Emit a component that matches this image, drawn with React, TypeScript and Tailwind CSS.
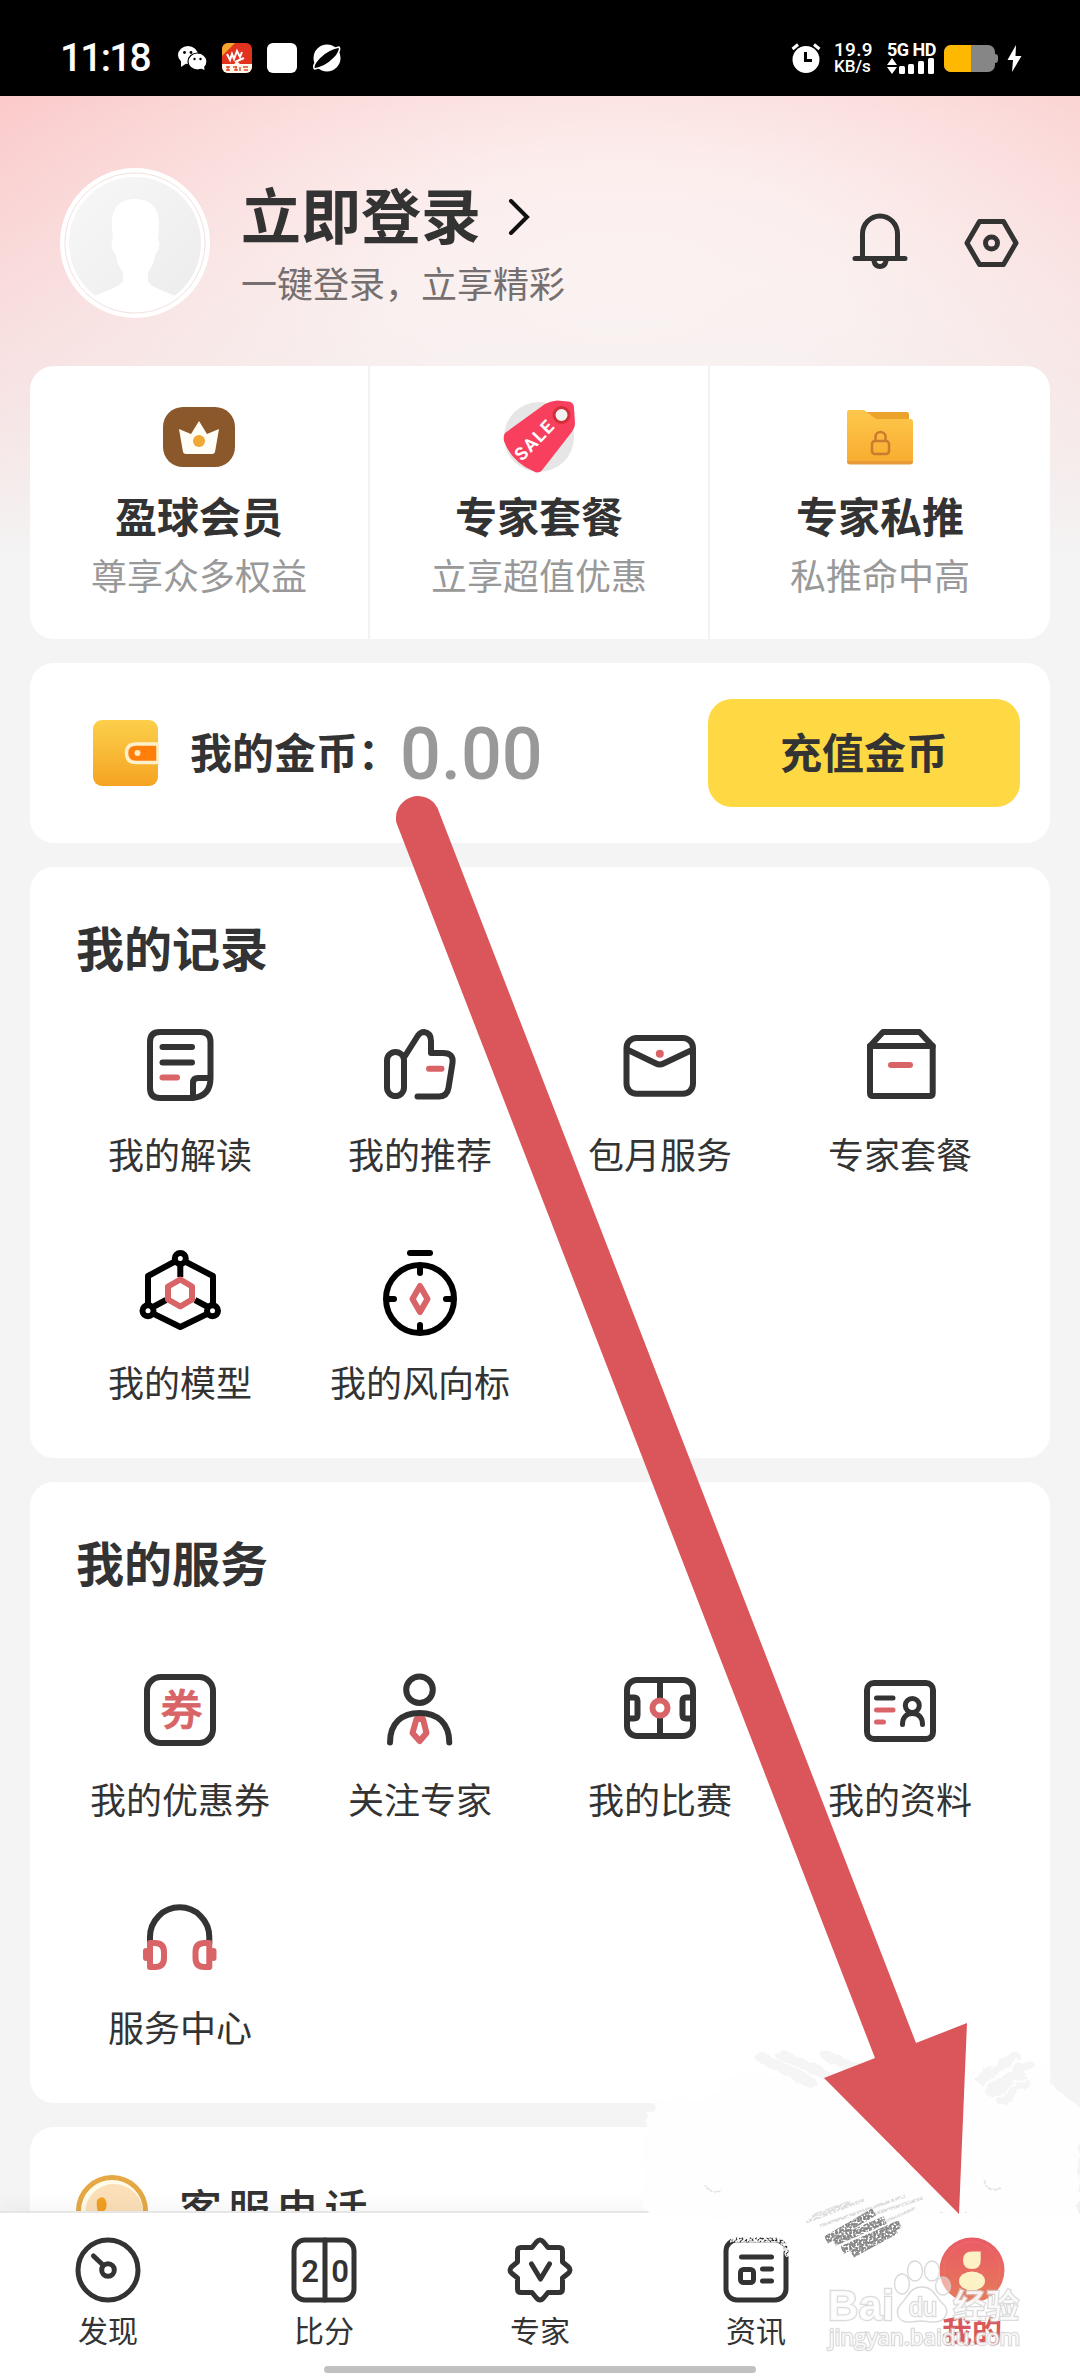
import type { ReactNode } from "react";

const DARK = "#333333";
const RED = "#d96467";

function Icon({ children, color = DARK }: { children: ReactNode; color?: string }) {
  return (
    <svg
      className="size-24"
      viewBox="0 0 96 96"
      fill="none"
      stroke={color}
      strokeWidth="6"
      strokeLinecap="round"
      strokeLinejoin="round"
    >
      {children}
    </svg>
  );
}

function NavIcon({ children }: { children: ReactNode }) {
  return (
    <svg
      className="size-[72px]"
      viewBox="0 0 72 72"
      fill="none"
      stroke={DARK}
      strokeWidth="5"
      strokeLinecap="round"
      strokeLinejoin="round"
    >
      {children}
    </svg>
  );
}

const records = [
  {
    label: "我的解读",
    icon: (
      <Icon>
        <path d="M61 81H28Q18 81 18 71V25Q18 15 28 15H68.500Q78.500 15 78.500 25V61Q78.500 79 61 81V66Q61 61 66 61H78.500" />
        <path d="M30.500 30H60M30.500 45.500H60" />
        <path d="M30.500 60.500H45" stroke={RED} />
      </Icon>
    ),
  },
  {
    label: "我的推荐",
    icon: (
      <Icon>
        <rect x="15" y="35" width="17" height="44" rx="8.500" />
        <path d="M33 39L46 18.500Q48.500 15 52 15Q59 16 59 24V36H71Q82 36 80.500 46L76.500 71Q75 79.500 67 79.500H45.500" />
        <path d="M57 51.700H69.500" stroke={RED} />
      </Icon>
    ),
  },
  {
    label: "包月服务",
    icon: (
      <Icon>
        <rect x="14.500" y="21" width="66.500" height="55.700" rx="10" />
        <path d="M16 33L44 46.500Q47.700 48.500 51.500 46.500L80 33" />
        <circle cx="47.800" cy="36.700" r="4" fill={RED} stroke="none" />
      </Icon>
    ),
  },
  {
    label: "专家套餐",
    icon: (
      <Icon>
        <path d="M18 29L31 15H67.500L80.700 29V76Q80.700 79 77.500 79H21Q18 79 18 76Z" />
        <path d="M18 29H80.700" />
        <path d="M39 48H58" stroke={RED} />
      </Icon>
    ),
  },
  {
    label: "我的模型",
    icon: (
      <Icon color="#000">
        <path d="M42 17L16 31V59M54 17L81 31V59M22 69L48.300 82L75 69M48.300 20V32M21 62L34 55M76 62L63 55" strokeLinecap="butt" />
        <circle cx="48.300" cy="13.500" r="5.500" strokeWidth="6" />
        <circle cx="16" cy="65.700" r="5.500" strokeWidth="6" />
        <circle cx="80.500" cy="65.700" r="5.500" strokeWidth="6" />
        <path d="M48.300 34.500L60 41.500V54.500L48.300 61.500L36 54.500V41.500Z" stroke={RED} fill="#fff" />
      </Icon>
    ),
  },
  {
    label: "我的风向标",
    icon: (
      <Icon color="#000">
        <path d="M38 8H58" />
        <circle cx="48" cy="54" r="34" />
        <path d="M48 22V28M48 80V86M16 54H22M74 54H80" />
        <path d="M48 41L55.500 54L48 67L40.500 54Z" stroke={RED} />
      </Icon>
    ),
  },
];

const services = [
  {
    label: "我的优惠券",
    icon: (
      <Icon>
        <rect x="15" y="15" width="66" height="66" rx="14" />
        <text
          x="49.500"
          y="63"
          fontSize="42"
          fontWeight="500"
          textAnchor="middle"
          fill={RED}
          stroke={RED}
          strokeWidth="0.800"
          fontFamily="'Noto Sans CJK SC', sans-serif"
        >
          券
        </text>
      </Icon>
    ),
  },
  {
    label: "关注专家",
    icon: (
      <Icon>
        <circle cx="47.500" cy="27.800" r="13.300" />
        <path d="M44.500 57H51L54.500 71L47.700 79L40.500 71Z" stroke={RED} strokeWidth="6" />
        <path d="M18 80.500C18 61 30 51 47.700 51C65 51 77.300 61 77.300 80.500" />
      </Icon>
    ),
  },
  {
    label: "我的比赛",
    icon: (
      <Icon>
        <rect x="15" y="18" width="66" height="56" rx="10" />
        <path d="M48 18V74M15 35.500H22Q25.500 35.500 25.500 39V53Q25.500 56.500 22 56.500H15M81 35.500H74Q70.500 35.500 70.500 39V53Q70.500 56.500 74 56.500H81" />
        <circle cx="48" cy="46" r="7.500" stroke={RED} fill="#fff" />
      </Icon>
    ),
  },
  {
    label: "我的资料",
    icon: (
      <Icon>
        <rect x="15" y="21" width="66" height="56" rx="7" />
        <g strokeWidth="5">
          <path d="M24.500 36H41" />
          <path d="M24.500 48H41M24.500 60H31.500" stroke={RED} />
          <circle cx="60.300" cy="43.500" r="7" />
          <path d="M50.500 62.500C50.500 54.500 55 51.500 60.300 51.500C66 51.500 70.500 54.500 70.500 62.500" />
        </g>
      </Icon>
    ),
  },
  {
    label: "服务中心",
    icon: (
      <Icon>
        <path d="M18 53V47A29.500 29.500 0 0 1 77.300 47V53" />
        <g stroke={RED}>
          <path d="M18 53H23Q32 53 32 62V68Q32 77 23 77H18ZM77.300 53H72.500Q63.500 53 63.500 62V68Q63.500 77 72.500 77H77.300Z" />
          <path d="M14 61V68M81.500 61V68" />
        </g>
      </Icon>
    ),
  },
];

const tabs = [
  {
    label: "发现",
    icon: (
      <NavIcon>
        <circle cx="36" cy="36" r="30" />
        <circle cx="36" cy="36" r="6.300" />
        <path d="M31 31L21.500 22" />
      </NavIcon>
    ),
  },
  {
    label: "比分",
    icon: (
      <NavIcon>
        <rect x="6" y="6" width="60" height="60" rx="11" />
        <path d="M37 6V66" />
        <g fill={DARK} stroke="none" fontFamily="Roboto, sans-serif" fontWeight="600" fontSize="31" textAnchor="middle">
          <text x="22" y="48">2</text>
          <text x="52" y="48">0</text>
        </g>
      </NavIcon>
    ),
  },
  {
    label: "专家",
    icon: (
      <NavIcon>
        <path d="M32.500 8Q36 4 39.500 8L44 13.500H55Q58.500 13.500 58.500 17V28L64 32.500Q68 36 64 39.500L58.500 44V55Q58.500 58.500 55 58.500H44L39.500 64Q36 68 32.500 64L28 58.500H17Q13.500 58.500 13.500 55V44L8 39.500Q4 36 8 32.500L13.500 28V17Q13.500 13.500 17 13.500H28Z" />
        <path d="M27.500 30L36.500 45L45.500 30" />
      </NavIcon>
    ),
  },
  {
    label: "资讯",
    icon: (
      <NavIcon>
        <rect x="6" y="6" width="60" height="60" rx="11" />
        <path d="M21.500 23H51.500M42.500 35H51.500M42.500 47H51.500" />
        <rect x="20.500" y="35.500" width="13" height="13" rx="3" />
      </NavIcon>
    ),
  },
  {
    label: "我的",
    active: true,
    icon: (
      <svg className="size-[72px]" viewBox="0 0 72 72">
        <defs>
          <linearGradient id="mine" x1="0" y1="0" x2="0" y2="1">
            <stop offset="0" stopColor="#e95b66" />
            <stop offset="1" stopColor="#e67a58" />
          </linearGradient>
        </defs>
        <circle cx="36" cy="36" r="32.500" fill="url(#mine)" />
        <circle cx="36" cy="36" r="28" fill="none" stroke="#f07a70" strokeOpacity="0.5" />
        <path d="M27 26Q27 17.500 36 17.500H44.700V26Q44.700 35 36 35Q27 35 27 26Z" fill="#fdf1c6" />
        <ellipse cx="36" cy="47" rx="13" ry="9.500" fill="#fdf1c6" />
      </svg>
    ),
  },
];

function StatusBar() {
  return (
    <div className="flex h-24 shrink-0 justify-between bg-black pt-[38px] pr-[58px] pl-[60px] text-white">
      <div className="flex h-10 items-center">
        <span className="w-[116px] font-[Roboto,sans-serif] text-[39px] leading-10 font-medium tracking-[-1.800px]">
          11:18
        </span>
        <svg className="mr-[15px] ml-[2px] h-6 w-[29px]" viewBox="0 0 29 24">
          <ellipse cx="10" cy="9" rx="10" ry="9" fill="#fff" />
          <path d="M3 15L3 21L9 17Z" fill="#fff" />
          <ellipse cx="19.500" cy="15.500" rx="9.500" ry="8.500" fill="#fff" stroke="#000" strokeWidth="1.200" />
          <path d="M22 22L26.500 24L26 19Z" fill="#fff" />
          <g fill="#000">
            <circle cx="6.500" cy="6.500" r="1.400" />
            <circle cx="13" cy="6.500" r="1.400" />
            <circle cx="16.500" cy="13" r="1.200" />
            <circle cx="22.500" cy="13" r="1.200" />
          </g>
        </svg>
        <svg className="mr-[15px] size-[30px]" viewBox="0 0 30 30">
          <defs>
            <clipPath id="appclip">
              <rect width="30" height="30" rx="6" />
            </clipPath>
          </defs>
          <g clipPath="url(#appclip)">
            <rect width="30" height="30" fill="#e2331f" />
            <path d="M0 0H13L0 13Z" fill="#f3a62c" />
            <path d="M5 11L8 17L10 11L12 16L15 8L18 14L20 9M13 19L22 15" stroke="#fff" strokeWidth="2" fill="none" />
            <path d="M0 21H12L15 18.500L18 21H30V30H0Z" fill="#fff6ec" />
            <path d="M4 24H8M4 27H8M6 23V28M11 24H15M12 27H16M14 23V28M18 24V28M21 24H26M22 27H26" stroke="#e2502c" strokeWidth="1.400" />
          </g>
        </svg>
        <div className="mr-[14px] size-[30px] rounded-md bg-white" />
        <svg className="h-[30px] w-8" viewBox="0 0 32 30">
          <circle cx="16" cy="15" r="13.500" fill="#fff" />
          <path d="M3.500 26C0 22 12 7 28 4C31 8 20 23 3.500 26Z" fill="#000" stroke="#fff" strokeWidth="1.500" />
        </svg>
      </div>
      <div className="flex h-10 items-center">
        <svg className="mr-[13px] h-[30px] w-[30px]" viewBox="0 0 30 30">
          <circle cx="15" cy="16.500" r="13.500" fill="#fff" />
          <path d="M1.500 6L7 1.500M28.500 6L23 1.500" stroke="#fff" strokeWidth="3" />
          <path d="M14.500 9V17.500H21" stroke="#000" strokeWidth="3" fill="none" />
        </svg>
        <div className="flex w-[53px] flex-col font-[Roboto,sans-serif] font-medium">
          <span className="text-[19px] leading-[17px] tracking-[0.300px]">19.9</span>
          <span className="text-[17px] leading-[17px]">KB/s</span>
        </div>
        <div className="mr-[9px] flex w-[48px] flex-col font-[Roboto,sans-serif] font-bold">
          <span className="text-[18px] leading-[17px] tracking-[-0.500px] whitespace-nowrap">5G HD</span>
          <svg className="h-[17px] w-[48px]" viewBox="0 0 48 17" fill="#fff">
            <path d="M5 0L10 7H0ZM5 16L0 9H10Z" />
            <rect x="12" y="8" width="6" height="8" rx="1.500" />
            <rect x="21" y="6" width="6" height="10" rx="1.500" />
            <rect x="31" y="3" width="6" height="13" rx="1.500" />
            <rect x="41" y="0" width="6" height="16" rx="1.500" />
          </svg>
        </div>
        <div className="flex h-[27px] w-[51px] overflow-hidden rounded-[7px] bg-[#868686]">
          <div className="w-[27px] bg-[#ffb800]" />
        </div>
        <div className="mr-[9px] h-[9px] w-[3px] rounded-r-sm bg-[#868686]" />
        <svg className="h-[27px] w-[15px]" viewBox="0 0 15 27">
          <path d="M9 0L0.500 15H6L5 27L14.500 11H8.500Z" fill="#fff" />
        </svg>
      </div>
    </div>
  );
}

function Header() {
  return (
    <div className="flex h-[270px] shrink-0 pt-[72px] pl-[60px]">
      <svg className="size-[150px] shrink-0" viewBox="0 0 150 150">
        <defs>
          <linearGradient id="avatar" x1="0" y1="0" x2="1" y2="1">
            <stop offset="0" stopColor="#f7f7f7" />
            <stop offset="1" stopColor="#ececec" />
          </linearGradient>
          <clipPath id="face">
            <circle cx="75" cy="75" r="67" />
          </clipPath>
        </defs>
        <circle cx="75" cy="75" r="75" fill="#fff" />
        <circle cx="75" cy="75" r="70" fill="#fff" stroke="#f3e0de" />
        <circle cx="75" cy="75" r="66" fill="url(#avatar)" />
        <g clipPath="url(#face)">
          <path
            d="M75 31C58 31 51 42 52 58L53 72C50 74 52 84 56 87C57 96 60 100 63 104V113C60 120 40 124 25 133V150H125V133C110 124 90 120 88 113V104C91 100 94 96 95 87C99 84 101 74 98 72L99 58C100 42 92 31 75 31Z"
            fill="#fff"
          />
        </g>
      </svg>
      <div className="ml-[31px] grow">
        <div className="mt-[7px] flex h-[76px] items-center">
          <h1 className="text-[60px] leading-[76px] font-bold text-[#333]">立即登录</h1>
          <svg className="mt-[7px] ml-[26px] h-9 w-[26px]" viewBox="0 0 26 36" fill="none" stroke="#111" strokeWidth="4">
            <path d="M4 2L20 18L4 34" strokeLinecap="round" />
          </svg>
        </div>
        <p className="mt-[5px] text-[36px] leading-[52px] text-[#766f6f]">一键登录，立享精彩</p>
      </div>
      <div className="mt-[39px] mr-[53px] flex gap-[39px]">
        <svg className="size-[72px]" viewBox="0 0 72 72" fill="none" stroke={DARK} strokeWidth="5" strokeLinecap="round">
          <path d="M18.500 51V27A17.500 18 0 0 1 53.500 27V51M11 51.500H61" />
          <path d="M30 54Q31 59.500 36 59.500Q41 59.500 42 54" />
        </svg>
        <svg className="size-[72px]" viewBox="0 0 72 72" fill="none" stroke={DARK} strokeWidth="5" strokeLinejoin="round">
          <path d="M12 36L24.500 14.500H48.500L61 36L48.500 57.500H24.500Z" />
          <circle cx="36.500" cy="36" r="6" />
        </svg>
      </div>
    </div>
  );
}

const perks = [
  {
    title: "盈球会员",
    desc: "尊享众多权益",
    icon: (
      <svg className="size-[84px]" viewBox="0 0 84 84">
        <rect x="6" y="12" width="72" height="60" rx="20" fill="#8a582b" />
        <path d="M22 34L34 39L42 26L50 39L62 34L58 57Q57.500 59 55 59H29Q26.500 59 26 57Z" fill="#fffdf6" />
        <circle cx="42" cy="46" r="6" fill="#f0a733" />
      </svg>
    ),
  },
  {
    title: "专家套餐",
    desc: "立享超值优惠",
    icon: (
      <svg className="size-[84px]" viewBox="0 0 84 84">
        <circle cx="42" cy="42" r="35" fill="#e6e6e6" />
        <path d="M8 38L48 9Q53 6 60 5.500L71 6.500Q77 7 77 13L78 28Q78 33 74 38L46 74Q42 80 36 76Q14 66 7 46Q6 41 8 38Z" fill="#f8405e" />
        <circle cx="64.500" cy="20" r="7.500" fill="#f2f2f2" stroke="#cf3038" strokeWidth="3" />
        <text
          x="0"
          y="0"
          transform="translate(25 67) rotate(-46)"
          fill="#fff"
          fontFamily="Roboto, sans-serif"
          fontWeight="700"
          fontSize="18"
          letterSpacing="1.500"
        >
          SALE
        </text>
      </svg>
    ),
  },
  {
    title: "专家私推",
    desc: "私推命中高",
    icon: (
      <svg className="size-[84px]" viewBox="0 0 84 84">
        <defs>
          <linearGradient id="folder" x1="0" y1="0" x2="0" y2="1">
            <stop offset="0" stopColor="#fdc84c" />
            <stop offset="1" stopColor="#f9ab2e" />
          </linearGradient>
        </defs>
        <path d="M20 17H69Q71 17 71 20V32H20Z" fill="#eca32c" />
        <path d="M9 17Q9 15 11 15H26L38 24H72Q75 24 75 27V66Q75 69 72 69H12Q9 69 9 66Z" fill="url(#folder)" />
        <path d="M9 66Q9 69.500 12 69.500H72Q75 69.500 75 66Z" fill="#e89a38" />
        <g fill="none" stroke="#cb7b30" strokeWidth="2.500">
          <rect x="34" y="46" width="17" height="13" rx="3" />
          <path d="M37.500 46V42A5 5 0 0 1 47.500 42V46" />
        </g>
      </svg>
    ),
  },
];

function Perks() {
  return (
    <div className="grid h-[273px] shrink-0 grid-cols-3 rounded-3xl bg-white">
      {perks.map((perk, i) => (
        <div
          key={perk.title}
          className={`flex flex-col items-center pt-[29px] ${i < 2 ? "border-r-2 border-[#f2f2f2]" : ""}`}
        >
          {perk.icon}
          <h2 className="mt-[9px] text-[42px] leading-[54px] font-bold text-[#333]">{perk.title}</h2>
          <p className="mt-[6px] text-[36px] leading-[52px] text-[#999]">{perk.desc}</p>
        </div>
      ))}
    </div>
  );
}

function Coins() {
  return (
    <div className="flex h-[180px] shrink-0 items-center rounded-3xl bg-white pr-[30px] pl-[63px]">
      <svg className="size-[66px]" viewBox="0 0 66 66">
        <defs>
          <linearGradient id="wallet" x1="0" y1="0" x2="0" y2="1">
            <stop offset="0" stopColor="#fccf4a" />
            <stop offset="1" stopColor="#f5a422" />
          </linearGradient>
        </defs>
        <rect width="65" height="66" rx="9" fill="url(#wallet)" />
        <path d="M65 24H43Q33.500 24 33.500 33Q33.500 42.500 43 42.500H65Z" fill="#ff7f0a" stroke="#fff0cc" strokeWidth="3.500" />
        <circle cx="44.500" cy="33" r="3" fill="#ffe9c0" />
      </svg>
      <span className="mb-1 ml-[31px] w-[210px] text-[42px] leading-[60px] font-bold whitespace-nowrap text-[#333]">
        我的金币：
      </span>
      <span className="mt-[3px] font-[Roboto,sans-serif] text-[72px] leading-[84px] font-medium text-[#999]">
        0.00
      </span>
      <button className="ml-auto h-[108px] w-[312px] rounded-3xl bg-[#fed944] pb-1 text-[42px] leading-[60px] font-bold text-[#333]">
        充值金币
      </button>
    </div>
  );
}

function Section({
  title,
  items,
  className,
  gridClassName,
}: {
  title: string;
  items: { label: string; icon: ReactNode }[];
  className: string;
  gridClassName: string;
}) {
  return (
    <div className={`shrink-0 rounded-3xl bg-white px-[30px] ${className}`}>
      <h2 className="ml-4 pt-[47px] text-[48px] leading-[64px] font-bold text-[#333]">{title}</h2>
      <div className={`grid grid-cols-4 ${gridClassName}`}>
        {items.map((item) => (
          <div key={item.label} className="flex h-[228px] flex-col items-center">
            {item.icon}
            <span className="mt-[13px] text-[36px] leading-[54px] whitespace-nowrap text-[#333]">{item.label}</span>
          </div>
        ))}
      </div>
    </div>
  );
}

function Hotline() {
  return (
    <div className="flex h-[144px] shrink-0 items-center rounded-t-3xl bg-white pl-[45px]">
      <svg className="mt-[24px] size-[74px]" viewBox="0 0 74 74">
        <circle cx="37" cy="37" r="33.500" fill="#fffbe9" stroke="#e5a845" strokeWidth="5" />
        <circle cx="39" cy="39" r="29" fill="#fbdfb8" />
        <path d="M22 26Q28 20 31 27Q33 34 29 37Q32 45 41 50L46 47Q54 50 49 56Q42 60 32 51Q20 40 22 26Z" fill="#f0a021" />
      </svg>
      <span className="mt-[16px] ml-[30px] text-[43px] leading-[60px] font-medium tracking-[5.500px] text-[#333]">
        客服电话
      </span>
    </div>
  );
}

function TabBar() {
  return (
    <nav className="relative grid h-[165px] shrink-0 grid-cols-5 border-t-2 border-[#e6e6e6] bg-white pt-[21px] shadow-[0_-6px_18px_rgba(0,0,0,0.04)]">
      {tabs.map((tab) => (
        <div key={tab.label} className="flex flex-col items-center">
          {tab.icon}
          <span
            className={`mt-[3px] text-[30px] leading-[40px] ${tab.active ? "font-bold text-[#d9585d]" : "text-[#333]"}`}
          >
            {tab.label}
          </span>
        </div>
      ))}
      <div className="absolute bottom-[3px] left-[324px] h-[7px] w-[432px] rounded-full bg-[#c1c1c1]" />
    </nav>
  );
}

// Brush patch, pointer arrow and watermark, laid over the whole screen
function Overlay() {
  return (
    <svg className="pointer-events-none absolute inset-0 h-[2376px] w-[1080px]" viewBox="0 0 1080 2376">
      <defs>
        <filter id="rough" x="-10%" y="-30%" width="120%" height="160%">
          <feTurbulence type="fractalNoise" baseFrequency="0.08" numOctaves="3" seed="4" result="n" />
          <feDisplacementMap in="SourceGraphic" in2="n" scale="14" />
        </filter>
        <filter id="grain" x="-10%" y="-30%" width="120%" height="160%">
          <feTurbulence type="fractalNoise" baseFrequency="0.5" numOctaves="2" seed="9" result="n" />
          <feColorMatrix in="n" type="matrix" values="0 0 0 0 0  0 0 0 0 0  0 0 0 0 0  5 0 0 0 -1.7" result="m" />
          <feComposite in="SourceGraphic" in2="m" operator="in" />
        </filter>
      </defs>

      <path
        d="M655 2100L642 2130V2208L655 2216H1080V2108L1052 2086L1046 2060L990 2068L830 2086L740 2070L700 2100Z"
        fill="#fefefe"
        filter="url(#rough)"
      />
      <g stroke="#f5f5f5" strokeWidth="11" strokeLinecap="round" filter="url(#rough)">
        <path d="M762 2058L812 2083M780 2054L832 2078M828 2056L860 2070M980 2078L1014 2056M990 2090L1030 2066M1002 2100L1026 2084" />
      </g>
      <g stroke="#777" strokeWidth="4" filter="url(#grain)">
        <path d="M806 2222L864 2200M812 2216L850 2202M820 2226L905 2196M874 2214L923 2198M880 2224L915 2208" strokeWidth="3" opacity="0.25" />
        <path d="M826 2240L874 2212M834 2242L885 2220M842 2250L900 2224M852 2254L896 2230" strokeWidth="8" opacity="0.9" />
        <path d="M984 2180Q988 2194 1001 2188M705 2185Q712 2196 722 2190" strokeWidth="2" fill="none" opacity="0.2" />
      </g>
      <path d="M730 2239H782L789 2256" stroke="#fff" strokeWidth="7" fill="none" filter="url(#grain)" />

      <path
        d="M396.500 823A22 22 0 0 1 437.500 808L916 2043L967 2023L959 2214L824 2078L875 2058Z"
        fill="#db565b"
      />

      <g fill="#fff" fillOpacity="0.45" stroke="#cfcfcf" strokeWidth="1.400" strokeOpacity="0.8">
        <ellipse cx="902" cy="2284" rx="7.500" ry="10" />
        <ellipse cx="915" cy="2271" rx="7.500" ry="10" />
        <ellipse cx="932" cy="2271" rx="7.500" ry="10" />
        <ellipse cx="943" cy="2286" rx="7.500" ry="9" />
        <path d="M922 2287C934 2287 936 2298 943 2304C951 2311 945 2322 935 2322C928 2322 926 2321 921 2321C916 2321 914 2322 908 2322C898 2322 894 2311 901 2304C908 2297 910 2287 922 2287Z" />
        <g paintOrder="stroke" strokeWidth="2.500" fillOpacity="0.85" strokeOpacity="0.75">
          <text x="828" y="2320" fontFamily="'Liberation Sans', sans-serif" fontWeight="700" fontSize="42" textLength="66">
            Bai
          </text>
          <text x="909" y="2316" fontFamily="'Liberation Sans', sans-serif" fontWeight="400" fontSize="25">
            du
          </text>
          <text x="953" y="2318" fontFamily="'Noto Sans CJK SC', sans-serif" fontWeight="500" fontSize="33">
            经验
          </text>
          <text x="829" y="2345" fontFamily="'Open Sans', sans-serif" fontSize="22" textLength="191">
            jingyan.baidu.com
          </text>
        </g>
      </g>
    </svg>
  );
}

export default function App() {
  return (
    <div className="relative flex h-[2376px] w-[1080px] flex-col overflow-hidden bg-[#f4f4f4] font-['Noto_Sans_CJK_SC',sans-serif]">
      <StatusBar />
      <div className="flex min-h-0 grow flex-col overflow-hidden bg-[linear-gradient(to_bottom,rgba(244,244,244,0)_0,rgba(244,244,244,0.15)_120px,rgba(244,244,244,0.55)_290px,#f4f4f4_460px),radial-gradient(ellipse_640px_330px_at_620px_190px,#fdf1f0_0%,#fceeed_35%,#fbdedd_70%,#fbc8c9_115%)]">
        <Header />
        <div className="flex shrink-0 flex-col gap-6 px-[30px]">
          <Perks />
          <Coins />
          <Section title="我的记录" items={records} className="h-[591px]" gridClassName="pt-[39px]" />
          <Section title="我的服务" items={services} className="h-[621px]" gridClassName="pt-[69px]" />
          <Hotline />
        </div>
      </div>
      <TabBar />
      <Overlay />
    </div>
  );
}
